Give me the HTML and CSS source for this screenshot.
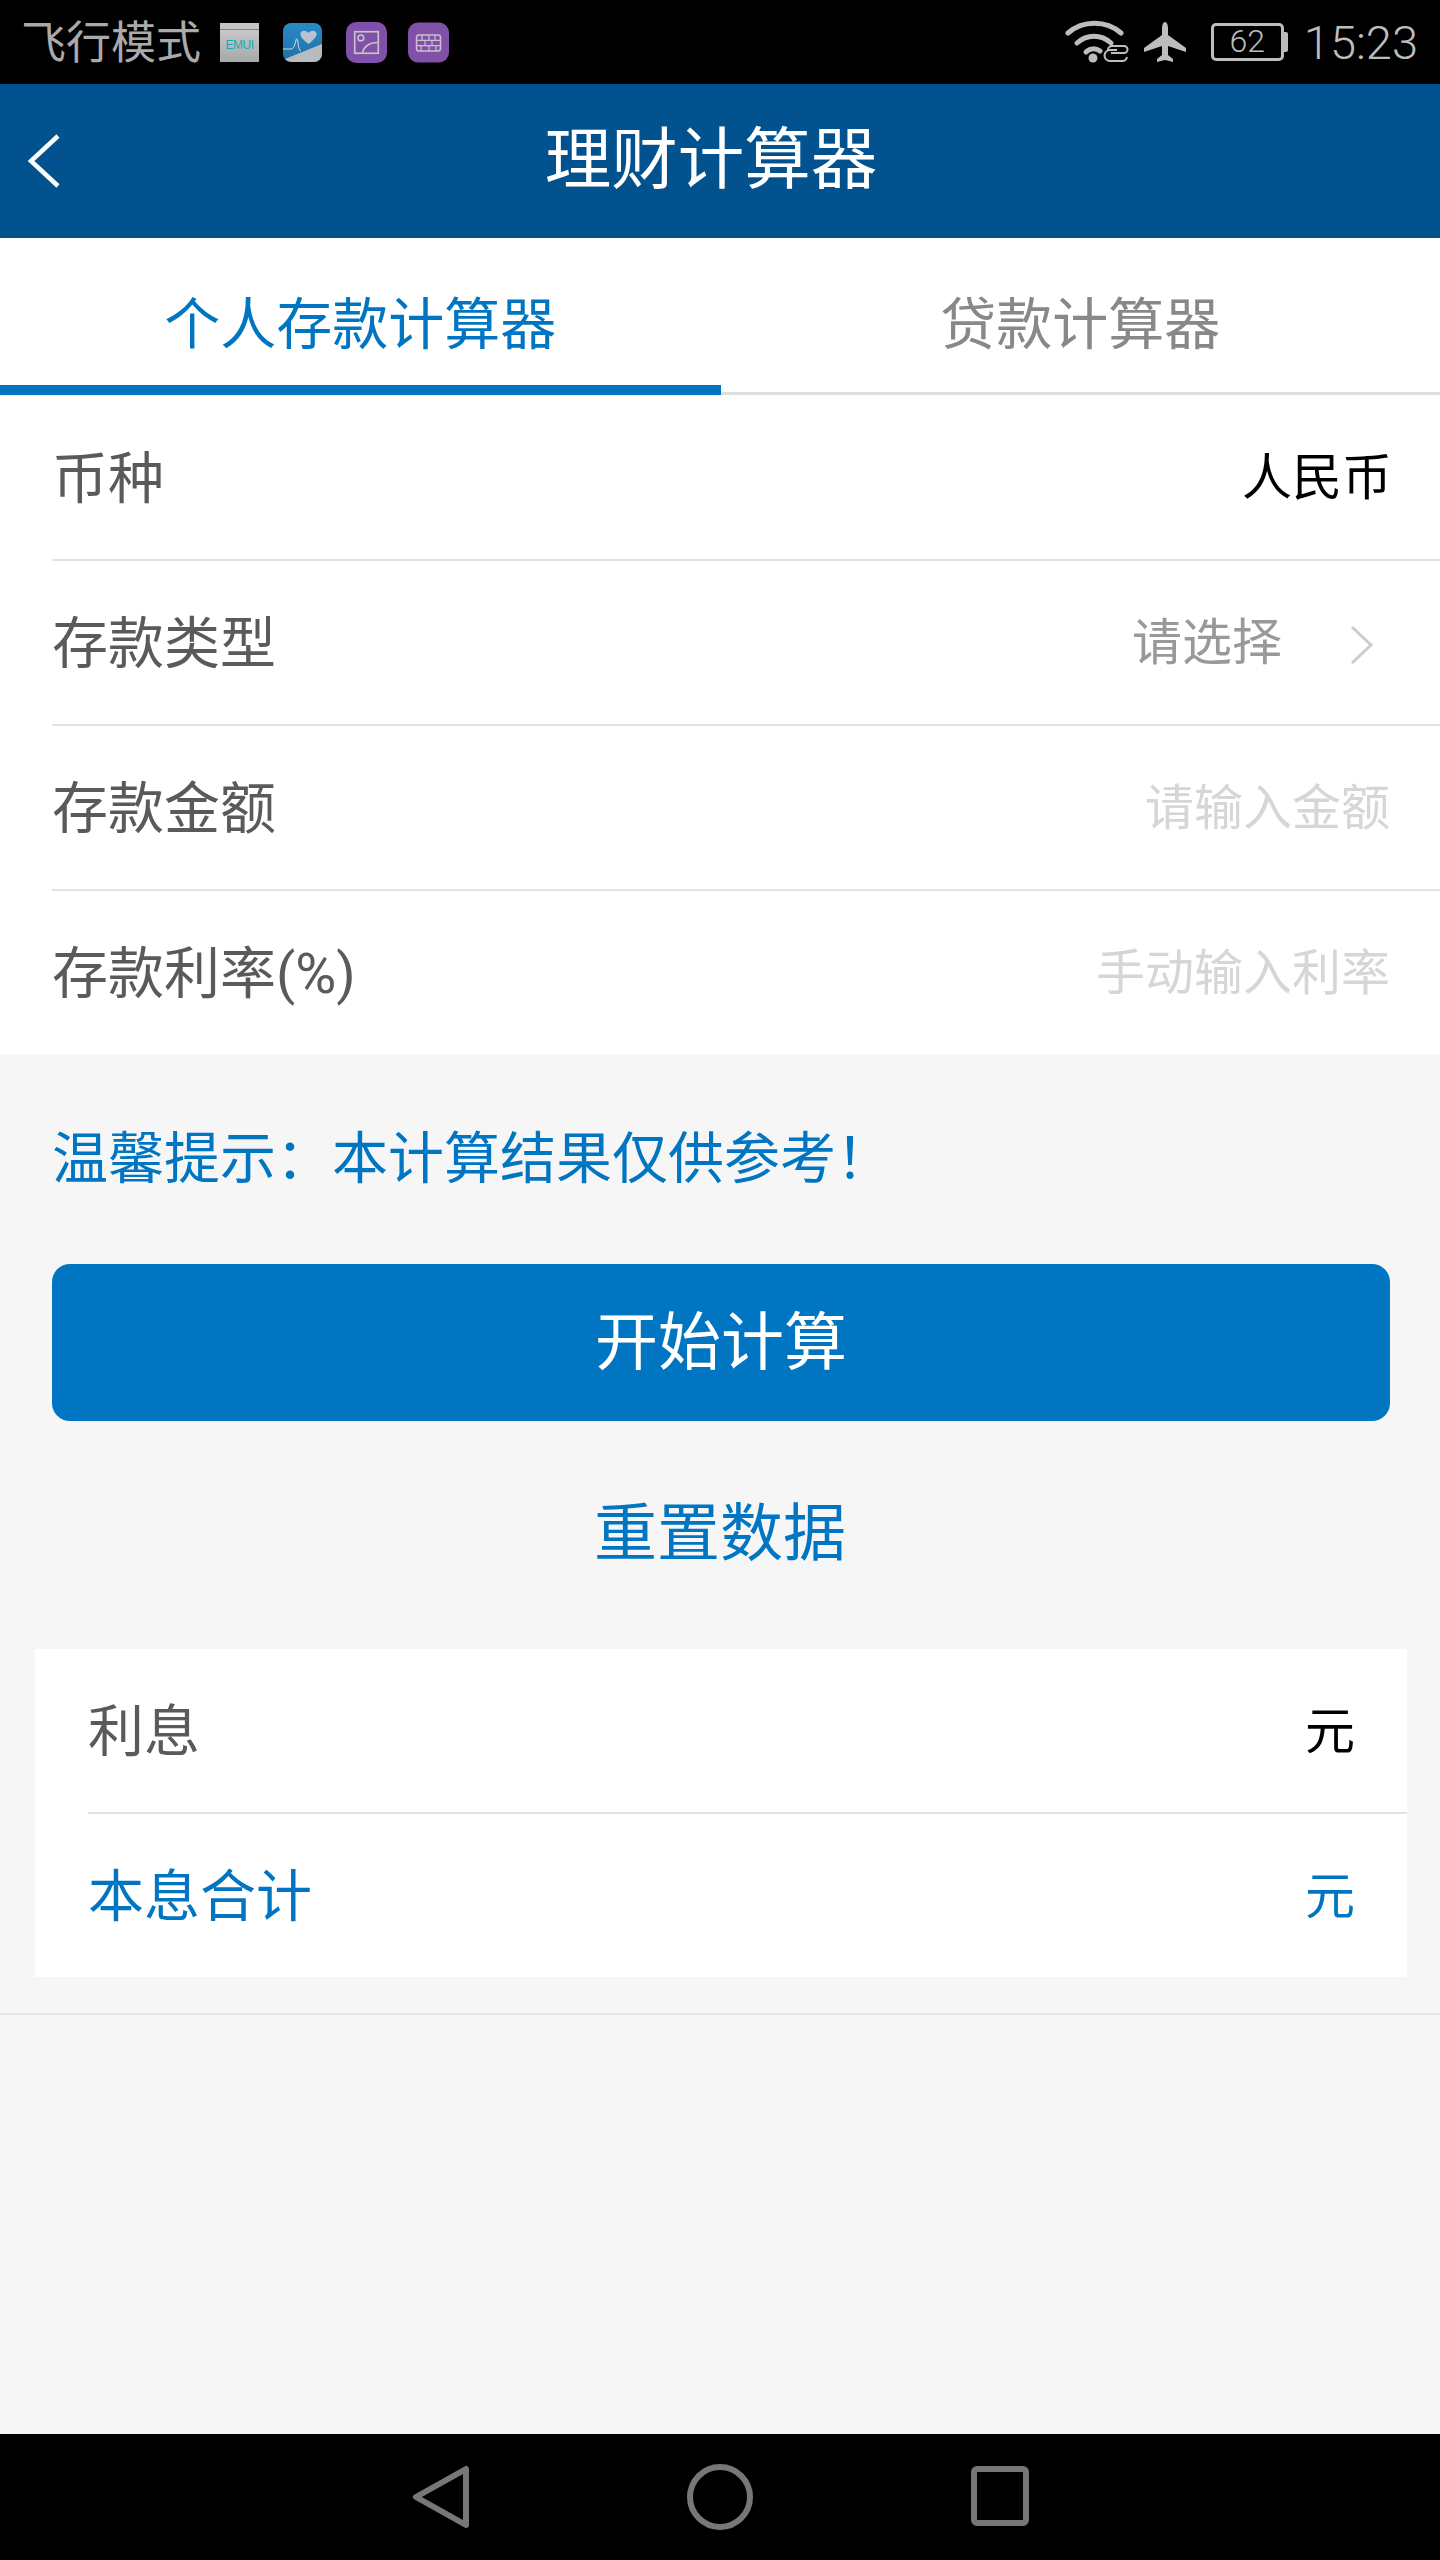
FILE: index.html
```html
<!DOCTYPE html>
<html lang="zh-CN">
<head>
    <meta charset="UTF-8">
    <meta name="viewport" content="width=device-width, initial-scale=1.0">
    <title>理财计算器</title>
    <link rel="stylesheet" href="styles.css">
</head>
<body>
    <div class="phone">
        <!-- Status bar -->
        <div class="status-bar">
            <div class="status-left">
                <span class="mode-text">飞行模式</span>
                <span class="note-icon app-emui"><span>EMUI</span></span>
                <svg class="note-icon" viewBox="0 0 39 39">
                    <defs>
                        <linearGradient id="healthBlue" x1="0" y1="0" x2="0" y2="1">
                            <stop offset="0" stop-color="#2a8ac6"/>
                            <stop offset="1" stop-color="#1e6fa8"/>
                        </linearGradient>
                    </defs>
                    <rect width="39" height="39" rx="8" fill="url(#healthBlue)"/>
                    <path d="M2 36L39 21V31a8 8 0 0 1-8 8H8a8 8 0 0 1-6-3Z" fill="#b9bcbf"/>
                    <path d="M0 26H8Q11 26 12.500 19T15 20 18 28" fill="none" stroke="#cfd8de" stroke-width="1"/>
                    <path d="M25.500 21C19 16 17 13 17.500 10 19 7 23 7 25.500 10 28 7 32 7 33.500 10 34 13 32 16 25.500 21Z" fill="#b9c3cb"/>
                </svg>
                <svg class="note-icon icon-gap" viewBox="0 0 40 40">
                    <rect width="40" height="40" rx="10" fill="#8150a8"/>
                    <rect x="8.5" y="9.5" width="23" height="21" fill="none" stroke="#c9c4cc" stroke-width="1.6"/>
                    <circle cx="14.500" cy="15.500" r="2.800" fill="none" stroke="#c9c4cc" stroke-width="1.500"/>
                    <path d="M16 30C18 23 24 20 31 20" fill="none" stroke="#c9c4cc" stroke-width="1.600"/>
                </svg>
                <svg class="note-icon icon-gap" viewBox="0 0 41 40">
                    <rect width="41" height="40" rx="10" fill="#8150a8"/>
                    <rect x="8.500" y="12.500" width="24" height="16" rx="2.500" fill="none" stroke="#c9c4cc" stroke-width="1.500"/>
                    <path d="M8.500 17.800H32.500M8.500 23.200H32.500M14 12.500V17.800M21 12.500V17.800M27 12.500V17.800M17 17.800V23.200M24 17.800V23.200M13 23.200V28.500M21 23.200V28.500M28 23.200V28.500" fill="none" stroke="#c9c4cc" stroke-width="1.200"/>
                </svg>
            </div>
            <div class="status-right">
                <svg class="wifi-icon" viewBox="0 0 66 44">
                    <path d="M3 13C18 0 41 0 56 13" fill="none" stroke="#bdbdbd" stroke-width="5" stroke-linecap="round"/>
                    <path d="M12 23C22 14 36 14 46 23" fill="none" stroke="#bdbdbd" stroke-width="5" stroke-linecap="round"/>
                    <path d="M21 32C25 28 31 28 35 31" fill="none" stroke="#bdbdbd" stroke-width="5" stroke-linecap="round"/>
                    <circle cx="28" cy="38" r="4.500" fill="#bdbdbd"/>
                    <path d="M46 33H59a3.500 3.500 0 0 0 0-7H47a4 4 0 0 0-4 4" fill="none" stroke="#bdbdbd" stroke-width="2"/>
                    <path d="M52 30H45a5 5 0 0 0 0 11H57a5 5 0 0 0 5-4" fill="none" stroke="#bdbdbd" stroke-width="2"/>
                </svg>
                <svg class="plane-icon" viewBox="0 0 42 40">
                    <path d="M21 0C23 0 24 3 24 7V13L42 26V30L24 24V33L29 37V40L21 38 13 40V37L18 33V24L0 30V26L18 13V7C18 3 19 0 21 0Z" fill="#bdbdbd"/>
                </svg>
                <div class="battery">
                    <div class="battery-body">62</div>
                    <div class="battery-tip"></div>
                </div>
                <span class="clock">15:23</span>
            </div>
        </div>

        <!-- Title bar -->
        <div class="title-bar">
            <svg class="back-arrow" viewBox="0 0 34 54">
                <path d="M31 2L4 27 31 52" fill="none" stroke="#fff" stroke-width="4.500"/>
            </svg>
            <h1>理财计算器</h1>
        </div>

        <!-- Tabs -->
        <div class="tabs">
            <div class="tab active">个人存款计算器</div>
            <div class="tab">贷款计算器</div>
        </div>

        <!-- Form -->
        <div class="form-list">
            <div class="row">
                <span class="row-label">币种</span>
                <span class="row-value">人民币</span>
            </div>
            <div class="row">
                <span class="row-label">存款类型</span>
                <span class="row-select">请选择</span>
                <svg class="row-arrow" viewBox="0 0 24 40">
                    <path d="M2 2L21 20 2 38" fill="none" stroke="#cdcdcd" stroke-width="3"/>
                </svg>
            </div>
            <div class="row">
                <span class="row-label">存款金额</span>
                <span class="row-hint">请输入金额</span>
            </div>
            <div class="row">
                <span class="row-label">存款利率(%)</span>
                <span class="row-hint">手动输入利率</span>
            </div>
        </div>

        <!-- Actions -->
        <div class="main-area">
            <p class="tip">温馨提示：本计算结果仅供参考！</p>
            <div class="btn-calc">开始计算</div>
            <div class="btn-reset">重置数据</div>

            <div class="result-card">
                <div class="result-row">
                    <span class="row-label">利息</span>
                    <span class="row-value">元</span>
                </div>
                <div class="result-row total">
                    <span class="row-label">本息合计</span>
                    <span class="row-value">元</span>
                </div>
            </div>
            <div class="end-line"></div>
        </div>

        <!-- Android nav bar -->
        <div class="nav-bar">
            <svg class="nav-back" viewBox="0 0 58 64">
                <path d="M54 4V60L4 32Z" fill="none" stroke="#777" stroke-width="6" stroke-linejoin="round"/>
            </svg>
            <svg class="nav-home" viewBox="0 0 66 66">
                <circle cx="33" cy="33" r="30" fill="none" stroke="#777" stroke-width="6"/>
            </svg>
            <svg class="nav-recent" viewBox="0 0 58 60">
                <rect x="3" y="3" width="52" height="54" rx="3" fill="none" stroke="#777" stroke-width="6"/>
            </svg>
        </div>
    </div>
</body>
</html>
```

FILE: styles.css
```css
* {
    box-sizing: border-box;
}

body {
    margin: 0;
    font-family: Roboto, "Noto Sans CJK SC", sans-serif;
    background-color: #f6f6f6;
}

.phone {
    width: 1440px;
    height: 2560px;
    display: flex;
    flex-direction: column;
    overflow: hidden;
}

/* Status bar */
.status-bar {
    height: 84px;
    flex-shrink: 0;
    background-color: #000;
    display: flex;
    justify-content: space-between;
    align-items: center;
    padding: 0 22px 0 21px;
}

.status-left,
.status-right {
    display: flex;
    align-items: center;
}

.mode-text {
    font-size: 45px;
    line-height: 88px;
    height: 84px;
    color: #aaa;
    width: 199px;
}

.note-icon {
    width: 39px;
    height: 39px;
    display: block;
    margin-right: 24px;
}

.icon-gap {
    width: 41px;
    height: 41px;
    margin-right: 21px;
}

.app-emui {
    background: linear-gradient(#c8c8c8, #a8a8a8);
    border-top: 6px solid #c4c4c4;
    box-shadow: inset 0 1px 0 #19a9b5;
    font-family: "Liberation Sans", sans-serif;
    font-size: 12px;
    letter-spacing: -0.5px;
    color: #19a9b5;
    display: flex;
    align-items: center;
    justify-content: center;
}

.wifi-icon {
    width: 66px;
    height: 44px;
    margin-right: 13px;
}

.plane-icon {
    width: 42px;
    height: 40px;
    margin-right: 25px;
}

.battery {
    display: flex;
    align-items: center;
    margin-right: 16px;
}

.battery-body {
    width: 73px;
    height: 38px;
    border: 3px solid #bdbdbd;
    border-radius: 5px;
    color: #bdbdbd;
    font-size: 32px;
    font-weight: 300;
    line-height: 31px;
    text-align: center;
}

.battery-tip {
    width: 4px;
    height: 20px;
    background-color: #bdbdbd;
    border-radius: 0 2px 2px 0;
}

.clock {
    font-size: 47px;
    font-weight: 300;
    color: #bdbdbd;
}

/* Title bar */
.title-bar {
    height: 154px;
    flex-shrink: 0;
    background: linear-gradient(#01538f, #01518d);
    position: relative;
    display: flex;
    align-items: center;
    justify-content: center;
    padding: 0 18px 14px 0;
}

.title-bar h1 {
    margin: 0;
    font-size: 66.500px;
    font-weight: 400;
    color: #fff;
}

.back-arrow {
    position: absolute;
    left: 27px;
    top: 50px;
    width: 34px;
    height: 54px;
}

/* Tabs */
.tabs {
    height: 158px;
    flex-shrink: 0;
    display: flex;
    background-color: #fff;
}

.tab {
    width: 50%;
    height: 157px;
    font-size: 56px;
    line-height: 174px;
    text-align: center;
    color: #888;
    border-bottom: 3px solid #ddd;
}

.tab.active {
    width: 721px;
    color: #0075c1;
    border-bottom: 10px solid #0075c1;
}

/* Form rows */
.form-list {
    background-color: #fff;
    padding-left: 52px;
    flex-shrink: 0;
}

.row {
    height: 165px;
    display: flex;
    align-items: center;
    padding: 0 50px 9px 0;
    border-bottom: 2px solid #e2e2e2;
}

.row:last-child {
    height: 163px;
    border-bottom: none;
}

.row-label {
    font-size: 56px;
    color: #5a5a5a;
    flex: 1;
}

.row-value {
    font-size: 50px;
    color: #000;
}

.form-list .row-value {
    margin-right: -2px;
}

.row-select {
    font-size: 50px;
    color: #999;
}

.row-arrow {
    width: 24px;
    height: 40px;
    margin: 14px 16px 0 68px;
}

.row-hint {
    font-size: 49px;
    color: #d6d6d6;
}

/* Tip and buttons */
.main-area {
    flex: 1;
    padding-top: 65px;
}

.tip {
    margin: 0 0 0 52px;
    font-size: 56px;
    line-height: 80px;
    color: #0075c1;
}

.btn-calc {
    margin: 65px 50px 0 52px;
    height: 157px;
    background-color: #0075c1;
    border-radius: 18px;
    color: #fff;
    font-size: 63px;
    line-height: 158px;
    text-align: center;
}

.btn-reset {
    height: 228px;
    font-size: 63px;
    line-height: 226px;
    text-align: center;
    color: #0075c1;
}

/* Result card */
.result-card {
    margin: 0 33px 0 35px;
    background-color: #fff;
    padding-left: 53px;
}

.result-row {
    height: 165px;
    display: flex;
    align-items: center;
    padding: 0 52px 8px 0;
    border-bottom: 2px solid #e2e2e2;
}

.result-row.total {
    height: 163px;
    border-bottom: none;
}

.result-row.total .row-label,
.result-row.total .row-value {
    color: #0075c1;
}

.end-line {
    margin-top: 36px;
    border-top: 2px solid #e8e8e8;
}

/* Nav bar */
.nav-bar {
    height: 126px;
    flex-shrink: 0;
    background-color: #000;
    position: relative;
}

.nav-bar svg {
    position: absolute;
}

.nav-back {
    left: 412px;
    top: 31px;
    width: 58px;
    height: 64px;
}

.nav-home {
    left: 687px;
    top: 30px;
    width: 66px;
    height: 66px;
}

.nav-recent {
    left: 971px;
    top: 32px;
    width: 58px;
    height: 60px;
}
```
